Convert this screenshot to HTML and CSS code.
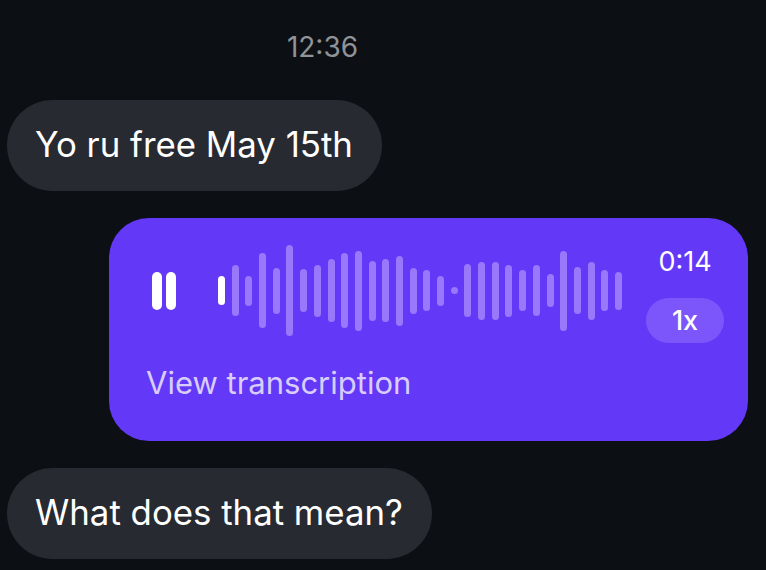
FILE: index.html
```html
<!DOCTYPE html>
<html lang="en">
<head>
    <meta charset="utf-8">
    <title>Chat</title>
    <link rel="stylesheet" href="styles.css">
</head>
<body>
    <div id="chat">
        <div class="stamp">12:36</div>
        <div class="bubble">Yo ru free May 15th</div>
        <div class="voice">
            <div class="player">
                <div class="pause"><span></span><span></span></div>
                <div class="wave">
                    <span class="played" style="height:29px"></span>
                    <span style="height:51px"></span>
                    <span style="height:30px"></span>
                    <span style="height:75px"></span>
                    <span style="height:46px"></span>
                    <span style="height:91px"></span>
                    <span style="height:43px"></span>
                    <span style="height:52px"></span>
                    <span style="height:63px"></span>
                    <span style="height:75px"></span>
                    <span style="height:80px"></span>
                    <span style="height:60px"></span>
                    <span style="height:63px"></span>
                    <span style="height:70px"></span>
                    <span style="height:46px"></span>
                    <span style="height:41px"></span>
                    <span style="height:30px"></span>
                    <span style="height:7px"></span>
                    <span style="height:53px"></span>
                    <span style="height:58px"></span>
                    <span style="height:58px"></span>
                    <span style="height:52px"></span>
                    <span style="height:41px"></span>
                    <span style="height:51px"></span>
                    <span style="height:33px"></span>
                    <span style="height:80px"></span>
                    <span style="height:47px"></span>
                    <span style="height:58px"></span>
                    <span style="height:41px"></span>
                    <span style="height:38px"></span>
                </div>
                <div class="side">
                    <div class="duration">0:14</div>
                    <div class="speed">1x</div>
                </div>
            </div>
            <div class="transcribe">View transcription</div>
        </div>
        <div class="bubble">What does that mean?</div>
    </div>
</body>
</html>
```

FILE: styles.css
```css
html, body{
    margin: 0;
    height: 100%;
    overflow: hidden;
    background-color: #0c1015;
}
#chat{
    display: flex;
    flex-direction: column;
    align-items: flex-start;
    padding: 31px 18px 0 7px;
    font-family: Inter, "Noto Sans", sans-serif;
    color: #fff;
}
.stamp{
    width: 631px;
    height: 32px;
    margin-bottom: 37px;
    text-align: center;
    font-size: 28px;
    line-height: 33px;
    color: #909397;
}
.bubble{
    height: 91px;
    padding: 0 29px 0 28px;
    border-radius: 46px;
    background-color: #272a30;
    font-size: 34.8px;
    line-height: 89px;
}
.voice{
    align-self: flex-end;
    width: 639px;
    height: 223px;
    margin: 27px 0;
    border-radius: 40px;
    background-color: #6338f7;
}
.player{
    display: flex;
    align-items: center;
    height: 145px;
    padding-left: 43px;
}
.pause{
    display: flex;
    gap: 4px;
    margin-right: 42px;
}
.pause span{
    width: 10px;
    height: 38px;
    border-radius: 5px;
    background-color: #fff;
}
.wave{
    display: flex;
    align-items: center;
    gap: 6.7px;
    width: 402px;
}
.wave span{
    flex: none;
    width: 7px;
    border-radius: 4px;
    background-color: #9a78fb;
}
.wave .played{
    background-color: #fff;
}
.side{
    display: flex;
    flex-direction: column;
    align-items: center;
    width: 78px;
    margin-left: 26px;
    margin-top: 9px;
}
.duration{
    font-size: 27px;
    line-height: 30px;
    margin-bottom: 21px;
}
.speed{
    width: 78px;
    height: 45px;
    border-radius: 23px;
    background-color: #7d56fb;
    text-align: center;
    font-size: 27px;
    font-weight: 500;
    line-height: 45px;
}
.transcribe{
    padding-left: 37px;
    font-size: 31px;
    line-height: 40px;
    color: #d9cdfd;
}
```
